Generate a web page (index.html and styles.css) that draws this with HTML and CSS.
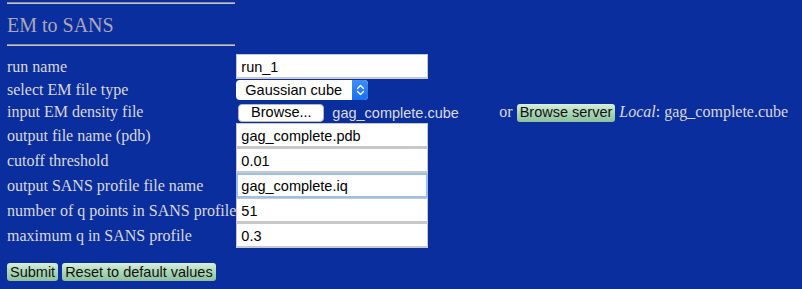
FILE: index.html
```html
<!DOCTYPE html>
<html>
<head>
    <meta charset="utf-8">
    <title>EM to SANS</title>
    <link rel="stylesheet" href="styles.css">
</head>
<body>
    <hr class="rule">
    <h2 class="title">EM to SANS</h2>
    <hr class="rule">

    <form class="em-form">
        <table class="fields">
            <tr>
                <td class="label">run name</td>
                <td><input type="text" class="field" value="run_1"></td>
            </tr>
            <tr class="short">
                <td class="label">select EM file type</td>
                <td>
                    <span class="select-wrap">
                        <select class="picker">
                            <option>Gaussian cube</option>
                        </select>
                        <span class="stepper">
                            <svg width="9" height="12" viewBox="0 0 9 12">
                                <path d="M1.5 4.5 L4.5 1.5 L7.5 4.5 M1.5 7.5 L4.5 10.5 L7.5 7.5" fill="none" stroke="#fff" stroke-width="1.3" stroke-linecap="round" stroke-linejoin="round"/>
                            </svg>
                        </span>
                    </span>
                </td>
            </tr>
            <tr class="short">
                <td class="label">input EM density file</td>
                <td class="nowrap">
                    <span class="file-box"><button type="button" class="browse">Browse...</button><span class="file-name">gag_complete.cube</span></span><span class="serif-text">or </span><button type="button" class="green-btn">Browse server</button> <span class="serif-text"><i>Local</i>: gag_complete.cube</span>
                </td>
            </tr>
            <tr>
                <td class="label">output file name (pdb)</td>
                <td><input type="text" class="field" value="gag_complete.pdb"></td>
            </tr>
            <tr>
                <td class="label">cutoff threshold</td>
                <td><input type="text" class="field" value="0.01"></td>
            </tr>
            <tr>
                <td class="label">output SANS profile file name</td>
                <td><input type="text" class="field focused" value="gag_complete.iq"></td>
            </tr>
            <tr>
                <td class="label">number of q points in SANS profile</td>
                <td><input type="text" class="field" value="51"></td>
            </tr>
            <tr>
                <td class="label">maximum q in SANS profile</td>
                <td><input type="text" class="field" value="0.3"></td>
            </tr>
        </table>

        <div class="actions">
            <button type="button" class="green-btn">Submit</button>
            <button type="button" class="green-btn">Reset to default values</button>
        </div>
    </form>
</body>
</html>
```

FILE: styles.css
```css
body {
    margin: 0;
    padding: 0 7px;
    background: #0a2e9e;
    color: #d9d9d9;
    font-family: "Liberation Serif", "Times New Roman", serif;
    font-size: 16px;
}

.rule {
    width: 228px;
    margin: 2px 0 0 0;
    border: none;
    border-top: 1px solid #8e8e9a;
    border-bottom: 1px solid #c4c4c4;
    height: 0;
}

.rule + .title {
    margin: 0;
    padding: 11px 0 9px 0;
    font-size: 20px;
    font-weight: normal;
    color: #aaa8b8;
    line-height: 20px;
}

.title + .rule {
    margin-top: 0;
}

.em-form {
    margin-top: 8px;
}

.fields {
    border-collapse: collapse;
    border-spacing: 0;
}

.fields td {
    padding: 0;
    height: 25px;
    vertical-align: middle;
}

.fields tr.short td {
    height: 22px;
}

.label {
    white-space: nowrap;
    padding-right: 1px;
    line-height: 18px;
}

.field {
    box-sizing: border-box;
    width: 192px;
    height: 25px;
    margin: 0;
    padding: 1px 4px 0 4px;
    border: 1px solid #c8c8c8;
    border-bottom-width: 2px;
    background: #fff;
    color: #000;
    font-family: "Liberation Sans", Arial, sans-serif;
    font-size: 14.5px;
    outline: none;
    display: block;
}

.field.focused {
    border: 2px solid #9dbfe6;
    padding-left: 3px;
}

.select-wrap {
    position: relative;
    display: inline-block;
    vertical-align: middle;
}

.picker {
    -webkit-appearance: none;
    appearance: none;
    box-sizing: border-box;
    width: 132px;
    height: 20px;
    margin: 0;
    padding: 0 0 0 9px;
    border: none;
    border-radius: 4px;
    background: #fff;
    color: #000;
    font-family: "Liberation Sans", Arial, sans-serif;
    font-size: 14.5px;
    display: block;
}

.stepper {
    position: absolute;
    top: 0;
    right: 0;
    width: 16px;
    height: 20px;
    border-radius: 0 4px 4px 0;
    background: linear-gradient(#3d8ff7, #1a6ff0);
    display: flex;
    align-items: center;
    justify-content: center;
}

.nowrap {
    white-space: nowrap;
}

.file-box {
    display: inline-block;
    width: 263px;
}

.browse {
    box-sizing: border-box;
    width: 86px;
    height: 18px;
    margin: 0 0 0 2px;
    padding: 0;
    border: 1px solid #b8b8b8;
    border-radius: 4px;
    background: #fff;
    color: #000;
    font-family: "Liberation Sans", Arial, sans-serif;
    font-size: 14.5px;
    line-height: 15px;
    vertical-align: middle;
}

.file-name {
    margin-left: 8px;
    font-family: "Liberation Sans", Arial, sans-serif;
    font-size: 14.5px;
    color: #dcdcdc;
    vertical-align: middle;
}

.serif-text {
    vertical-align: middle;
}

.green-btn {
    box-sizing: border-box;
    height: 18px;
    margin: 0;
    padding: 0 3px;
    border: none;
    border-radius: 3px;
    background: linear-gradient(#d8f0dc, #a9d6b6 50%, #8fc09e);
    color: #111;
    font-family: "Liberation Sans", Arial, sans-serif;
    font-size: 14.5px;
    line-height: 17px;
    vertical-align: middle;
}

.actions {
    margin-top: 15px;
    display: flex;
    gap: 4px;
}
```
